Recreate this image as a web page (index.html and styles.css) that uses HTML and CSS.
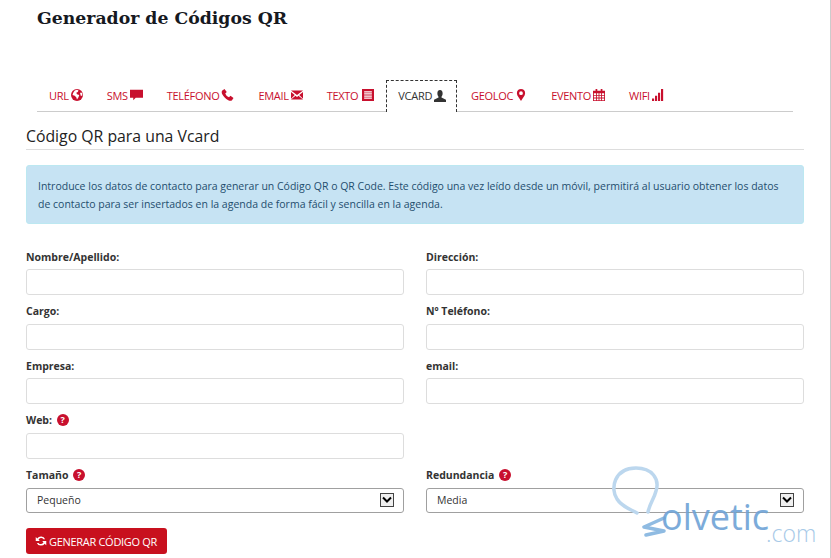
FILE: index.html
```html
<!DOCTYPE html>
<html lang="en">
  <head>
    <meta charset="UTF-8" />
    <title>Generador de Códigos QR</title>
    <link rel="stylesheet" href="styles.css">
  </head>
  <body>
    <div class="page">
      <h1>Generador de Códigos QR</h1>

      <ul class="tabs">
        <li><a href="#">URL
          <svg class="ico" viewBox="0 0 16 16"><circle cx="8" cy="8" r="8"/><path fill="#fff" d="M5 2l3-1 2 1-1 2-2 1 1 2 3 1-1 3-2 3-1-3-2-2-3-1 1-3zM12 5l3 0 0 4-2 0z"/></svg></a></li>
        <li><a href="#">SMS
          <svg class="ico wide" viewBox="0 0 16 13"><path d="M0 0h16v10H7l-3 3v-3H0z"/></svg></a></li>
        <li><a href="#">TELÉFONO
          <svg class="ico wide" viewBox="0 0 16 16"><path d="M1 2l3-2 3 4-2 2c1 2 2 4 5 5l2-2 4 3-2 3c-1 1-3 1-5 0C5 13 3 10 1 7 0 5 0 3 1 2z"/></svg></a></li>
        <li><a href="#">EMAIL
          <svg class="ico" viewBox="0 0 16 12"><path d="M0 0h16L8 6zM0 2l5 4-5 5zM16 2l-5 4 5 5zM6 7l2 1.500L10 7l6 5H0z"/></svg></a></li>
        <li class="spaced"><a href="#">TEXTO
          <svg class="ico" viewBox="0 0 14 14"><path fill-rule="evenodd" d="M0 0h14v14H0zM2.500 2.500v1.500h9V2.500zM2.500 5v1.500h9V5zM2.500 7.500V9h9V7.500zM2.500 10v1.500h9V10z"/></svg></a></li>
        <li class="active"><a href="#">VCARD
          <svg class="ico" viewBox="0 0 16 16"><path d="M8 0c2.500 0 3.500 2 3.500 4.500S10.500 8 10 9v1l6 3v3H0v-3l6-3V9C5.500 8 4.500 7 4.500 4.500S5.500 0 8 0z"/></svg></a></li>
        <li><a href="#">GEOLOC
          <svg class="ico" viewBox="0 0 16 16"><path fill-rule="evenodd" d="M8 0c3 0 5.500 2 5.500 5.500C13.500 9 10 12 8 16 6 12 2.500 9 2.500 5.500 2.500 2 5 0 8 0zm0 3a2.500 2.500 0 1 0 0 5 2.500 2.500 0 0 0 0-5z"/></svg></a></li>
        <li><a href="#">EVENTO
          <svg class="ico" viewBox="0 0 14 14"><path fill-rule="evenodd" d="M0 2h3V0h2v2h4V0h2v2h3v12H0zM1 5v2h2.500V5zm3.500 0v2h2V5zm3 0v2h2V5zm3 0v2H13V5zM1 8v2h2.500V8zm3.500 0v2h2V8zm3 0v2h2V8zm3 0v2H13V8zM1 11v2h2.500v-2zm3.500 0v2h2v-2zm3 0v2h2v-2zm3 0v2H13v-2z"/></svg></a></li>
        <li><a href="#">WIFI
          <svg class="ico" viewBox="0 0 14 14"><path d="M0 11h2.500v3H0zM3.500 8H6v6H3.500zM7 4.500h2.500V14H7zM10.500 0H13v14h-2.500z"/></svg></a></li>
      </ul>

      <h3>Código QR para una Vcard</h3>

      <div class="alert">
        Introduce los datos de contacto para generar un Código QR o QR Code. Este código una vez leído desde un móvil, permitirá al usuario obtener los datos de contacto para ser insertados en la agenda de forma fácil y sencilla en la agenda.
      </div>

      <form class="form-grid">
        <div class="field"><label>Nombre/Apellido:</label><input type="text"></div>
        <div class="field"><label>Dirección:</label><input type="text"></div>
        <div class="field"><label>Cargo:</label><input type="text"></div>
        <div class="field"><label>Nº Teléfono:</label><input type="text"></div>
        <div class="field"><label>Empresa:</label><input type="text"></div>
        <div class="field"><label>email:</label><input type="text"></div>
        <div class="field"><label>Web: <span class="help">?</span></label><input type="text"></div>
        <div class="field"></div>
        <div class="field"><label>Tamaño <span class="help">?</span></label>
          <div class="select">Pequeño<span class="arrow"><svg viewBox="0 0 12 12"><path d="M2 3.500l4 4 4-4" fill="none" stroke="#000" stroke-width="2"/></svg></span></div>
        </div>
        <div class="field"><label>Redundancia <span class="help">?</span></label>
          <div class="select">Media<span class="arrow"><svg viewBox="0 0 12 12"><path d="M2 3.500l4 4 4-4" fill="none" stroke="#000" stroke-width="2"/></svg></span></div>
        </div>
      </form>

      <button class="btn" type="button">
        <svg class="ico" viewBox="0 0 16 16"><path d="M13.500 5.500A6 6 0 0 0 3 4.500L1 2.500V8h5.500L4.700 6.200a3.800 3.800 0 0 1 6.600-.7zM2.500 10.500A6 6 0 0 0 13 11.500l2 2V8H9.500l1.800 1.800a3.800 3.800 0 0 1-6.600.7z"/></svg>
        <span>GENERAR CÓDIGO QR</span></button>
    </div>

    <!-- watermark -->
    <div class="watermark">
      <svg viewBox="0 0 60 72">
        <path d="M27 48C20 44 12 42 7 34 0 24 4 3 26 3 42 3 50 14 46 26 44 34 40 38 38 47" fill="none" stroke="#bcd7ee" stroke-width="3.500" stroke-linecap="round"/>
        <path d="M54 53L34 62 54 66 36 70" fill="none" stroke="#8fbbe2" stroke-width="3.500" stroke-linecap="round" stroke-linejoin="round"/>
      </svg>
      <span class="wm-name">olvetic</span><span class="wm-com">.com</span>
    </div>
  </body>
</html>
```

FILE: styles.css
```css
body {
  font-family: "Open Sans", Arial, sans-serif;
  background: white;
  margin: 0;
  padding: 0;
  color: #333;
  height: 558px;
  overflow: hidden;
  position: relative;
  border-right: 1px solid #ccc;
  box-sizing: border-box;
}

.page {
  width: 778px;
  margin-left: 26px;
}

h1 {
  font-family: "DejaVu Serif", serif;
  font-size: 17.300px;
  line-height: 24px;
  color: #16191f;
  margin: 0;
  padding: 6px 0 0 11px;
  height: 75px;
  box-sizing: border-box;
}

.tabs {
  display: flex;
  list-style: none;
  margin: 5px 11px 0;
  padding: 0;
  height: 32px;
  border-bottom: 1px solid #ccc;
  box-sizing: border-box;
}

.tabs a {
  display: flex;
  align-items: center;
  gap: 2px;
  height: 32px;
  box-sizing: border-box;
  padding: 0 12px 2px;
  font-size: 11px;
  letter-spacing: -0.3px;
  color: #c8102e;
  text-decoration: none;
}

.tabs .active {
  margin-right: 2px;
}

.tabs .active a {
  color: #333;
  background: white;
  border: 1px dashed #333;
  border-bottom: none;
  padding: 0 10px 2px 11px;
}

.tabs .spaced .ico {
  margin-left: 2px;
}

.ico {
  width: 12px;
  height: 12px;
  fill: currentColor;
  flex: none;
}

.ico.wide {
  width: 13px;
}

h3 {
  font-size: 15.800px;
  font-weight: normal;
  line-height: 22px;
  color: #222;
  margin: 13px 0 0;
  padding-bottom: 2px;
  height: 25px;
  border-bottom: 1px solid #ddd;
  box-sizing: border-box;
}

.alert {
  margin-top: 15px;
  height: 59px;
  box-sizing: border-box;
  padding: 11px 11px;
  background: #c6e3f3;
  border: 1px solid #bce8f1;
  border-radius: 3px;
  color: #1f4e6e;
  font-size: 10.500px;
  line-height: 18px;
}

.form-grid {
  display: grid;
  grid-template-columns: 378px 378px;
  column-gap: 22px;
  margin-top: 25.700px;
}

.field {
  height: 54.500px;
}

label {
  display: block;
  font-size: 10.500px;
  font-weight: bold;
  line-height: 14px;
  height: 19.500px;
  color: #333;
}

input {
  display: block;
  width: 100%;
  height: 26px;
  box-sizing: border-box;
  border: 1px solid #ddd;
  border-radius: 3px;
  background: white;
}

.help {
  display: inline-block;
  width: 12px;
  height: 12px;
  margin-left: 2px;
  border-radius: 50%;
  background: #c8102e;
  color: white;
  font-size: 9px;
  line-height: 12px;
  text-align: center;
  vertical-align: 1px;
}

.select {
  display: flex;
  align-items: center;
  justify-content: space-between;
  height: 25.500px;
  margin-top: 0.500px;
  box-sizing: border-box;
  padding: 0 9px 1px 10px;
  border: 1px solid #a0a0a0;
  border-radius: 3px;
  font-size: 10.500px;
  color: #333;
}

.arrow {
  display: block;
  width: 14px;
  height: 14px;
  box-sizing: border-box;
  border: 1px solid #444;
  background: #f0f0f0;
}

.arrow svg {
  display: block;
  width: 12px;
  height: 12px;
}

.btn {
  display: flex;
  align-items: center;
  gap: 2px;
  width: 141px;
  height: 26px;
  margin-top: 6px;
  padding: 0 9px;
  border: none;
  border-radius: 3px;
  background: #c8101e;
  color: white;
  font-family: inherit;
  font-size: 11px;
  letter-spacing: -0.3px;
  white-space: nowrap;
}

.watermark {
  position: absolute;
  left: 610px;
  top: 465px;
  width: 205px;
  height: 85px;
  pointer-events: none;
}

.watermark svg {
  position: absolute;
  left: 0;
  top: 0;
  width: 60px;
  height: 72px;
}

.wm-name {
  position: absolute;
  left: 51px;
  top: 29px;
  font-family: "Open Sans", sans-serif;
  font-size: 36px;
  font-weight: 500;
  line-height: 46px;
  color: #6ea3d6;
  opacity: 0.9;
}

.wm-com {
  position: absolute;
  left: 156px;
  top: 54px;
  font-family: "Open Sans", sans-serif;
  font-size: 23px;
  font-weight: 300;
  line-height: 28px;
  color: #a8cae8;
}
```
